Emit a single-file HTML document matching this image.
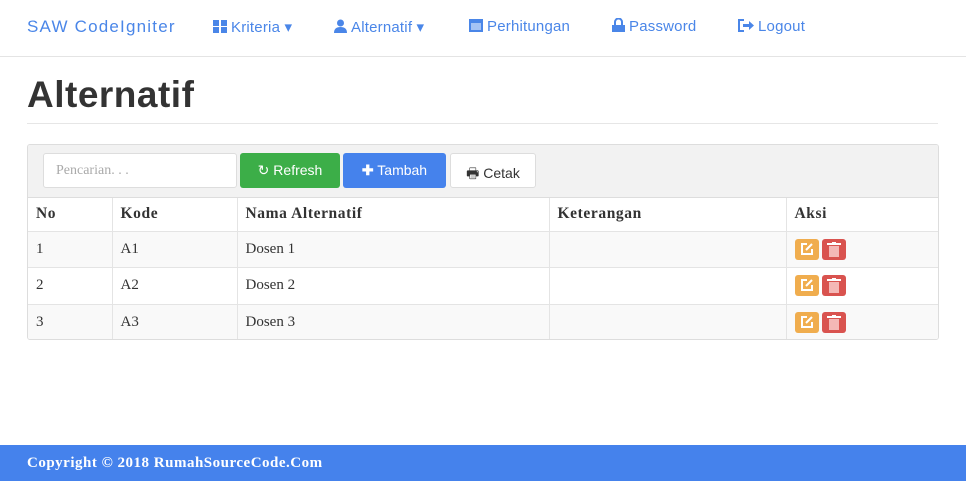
<!DOCTYPE html>
<html><head><meta charset="utf-8"><style>
*{box-sizing:border-box;margin:0;padding:0}
body{width:966px;height:481px;position:relative;background:#fff;font-family:"Liberation Sans",sans-serif;overflow:hidden}
.nav{position:absolute;left:0;top:0;width:966px;height:57px;border-bottom:1px solid #e4e4e4;background:#fff}
.nav span{position:absolute;top:18px;font-size:15px;color:#4a86e8;white-space:nowrap;letter-spacing:.2px}
.nav svg{vertical-align:-1px;margin-right:4px}
h1{position:absolute;left:27px;top:74px;font-size:37px;font-weight:bold;color:#333;letter-spacing:.5px}
.hr{position:absolute;left:27px;top:123px;width:911px;height:1px;background:#e6e6e6}
.panel{position:absolute;left:27px;top:144px;width:912px;height:196px;border:1px solid #ddd;border-radius:3px;background:#fff;overflow:hidden}
.tb{height:53px;background:#f2f2f2;border-bottom:1px solid #ddd;position:relative}
.inp{position:absolute;left:15px;top:8px;width:194px;height:35px;border:1px solid #ddd;border-radius:3px;background:#fff;font-family:"Liberation Serif",serif;color:#aaa;font-size:14px;padding:9px 12px}
.btn{position:absolute;top:8px;height:35px;border-radius:3px;font-size:14px;padding:9px 0;text-align:center;color:#fff}
table{border-collapse:collapse;width:100%;font-family:"Liberation Serif",serif;font-size:15px;color:#333}
td,th{border-right:1px solid #e4e4e4;border-bottom:1px solid #e4e4e4;text-align:left;padding:0 8px;height:36.5px}
th{font-size:15.5px;letter-spacing:.6px}
td:last-child,th:last-child{border-right:none}
tr:last-child td{border-bottom:none}
th{height:33px}
tr.s td{background:#f9f9f9}
.e,.d{display:inline-block;width:24px;height:21px;border-radius:3px;vertical-align:middle;position:relative}
.e{background:#f0ad4e}.d{background:#d9534f;margin-left:3px}
.e svg,.d svg{position:absolute;left:5px;top:3px}
.foot{position:absolute;left:0;top:445px;width:966px;height:36px;background:#4582ec;color:#fff;font-family:"Liberation Serif",serif;font-weight:bold;font-size:15px;letter-spacing:.5px;padding:10px 27px}
</style></head><body>
<div class="nav">
<span style="left:27px;font-size:17px;top:17px;letter-spacing:1.2px">SAW CodeIgniter</span>
<span style="left:213px"><svg width="14" height="13"><rect x="0" y="0" width="6" height="6" fill="#4a86e8"/><rect x="8" y="0" width="6" height="6" fill="#4a86e8"/><rect x="0" y="7" width="6" height="6" fill="#4a86e8"/><rect x="8" y="7" width="6" height="6" fill="#4a86e8"/></svg>Kriteria ▾</span>
<span style="left:334px"><svg width="13" height="14"><circle cx="6.5" cy="4" r="3.5" fill="#4a86e8"/><path d="M0 14 Q0 8 6.5 8 Q13 8 13 14Z" fill="#4a86e8"/></svg>Alternatif ▾</span>
<span style="left:469px"><svg width="14" height="14"><rect x="0" y="1" width="14" height="13" fill="#4a86e8"/><rect x="2" y="5" width="10" height="7" fill="#fff" opacity=".5"/></svg>Perhitungan</span>
<span style="left:612px"><svg width="13" height="14"><path d="M3 7V4a3.5 3.5 0 0 1 7 0v3" stroke="#4a86e8" stroke-width="2" fill="none"/><rect x="0" y="7" width="13" height="7" fill="#4a86e8"/></svg>Password</span>
<span style="left:738px"><svg width="16" height="13"><path d="M6 1H1v11h5" stroke="#4a86e8" stroke-width="2" fill="none"/><path d="M5 5h6V2l5 4.5-5 4.5V8H5z" fill="#4a86e8"/></svg>Logout</span>
</div>
<h1>Alternatif</h1>
<div class="hr"></div>
<div class="panel">
<div class="tb">
<div class="inp">Pencarian. . .</div>
<div class="btn" style="left:212px;width:100px;background:#3cae48">↻ Refresh</div>
<div class="btn" style="left:315px;width:103px;background:#4582ec"><b>✚</b> Tambah</div>
<div class="btn" style="left:422px;width:86px;background:#fff;border:1px solid #ddd;color:#333">🖶 Cetak</div>
</div>
<table>
<tr><th style="width:84px">No</th><th style="width:125px">Kode</th><th style="width:312px">Nama Alternatif</th><th style="width:237px">Keterangan</th><th>Aksi</th></tr>
<tr class="s"><td>1</td><td>A1</td><td>Dosen 1</td><td></td><td><span class="e"><svg width="14" height="14"><path d="M7 2H2v10h10V7" stroke="#fff" stroke-width="2" fill="none"/><path d="M6 8l6-6" stroke="#fff" stroke-width="2"/></svg></span><span class="d"><svg width="14" height="15"><rect x="0" y="1" width="14" height="2" fill="#fff"/><rect x="5" y="0" width="4" height="2" fill="#fff"/><rect x="2" y="4" width="10" height="11" fill="#f4b8b6"/></svg></span></td></tr>
<tr><td>2</td><td>A2</td><td>Dosen 2</td><td></td><td><span class="e"><svg width="14" height="14"><path d="M7 2H2v10h10V7" stroke="#fff" stroke-width="2" fill="none"/><path d="M6 8l6-6" stroke="#fff" stroke-width="2"/></svg></span><span class="d"><svg width="14" height="15"><rect x="0" y="1" width="14" height="2" fill="#fff"/><rect x="5" y="0" width="4" height="2" fill="#fff"/><rect x="2" y="4" width="10" height="11" fill="#f4b8b6"/></svg></span></td></tr>
<tr class="s"><td>3</td><td>A3</td><td>Dosen 3</td><td></td><td><span class="e"><svg width="14" height="14"><path d="M7 2H2v10h10V7" stroke="#fff" stroke-width="2" fill="none"/><path d="M6 8l6-6" stroke="#fff" stroke-width="2"/></svg></span><span class="d"><svg width="14" height="15"><rect x="0" y="1" width="14" height="2" fill="#fff"/><rect x="5" y="0" width="4" height="2" fill="#fff"/><rect x="2" y="4" width="10" height="11" fill="#f4b8b6"/></svg></span></td></tr>
</table>
</div>
<div class="foot">Copyright © 2018 RumahSourceCode.Com</div>
</body></html>
